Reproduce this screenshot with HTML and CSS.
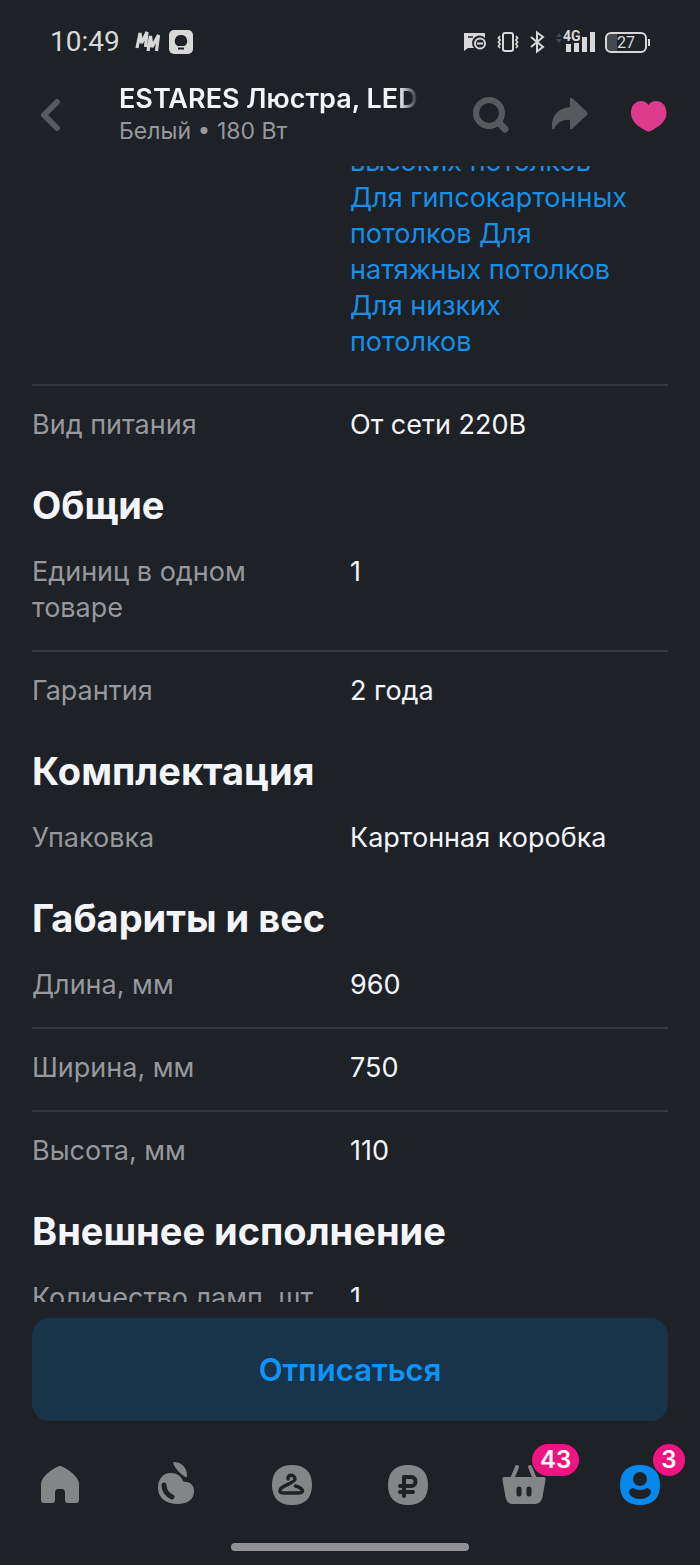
FILE: index.html
```html
<!DOCTYPE html>
<html lang="ru">

<head>
  <meta charset="UTF-8" />
  <meta name="viewport" content="width=device-width, initial-scale=1.0" />
  <title>ESTARES Люстра</title>
  <link rel="stylesheet" href="styles.css">
</head>

<body>
  <!-- строка состояния -->
  <div class="status">
    <span class="time">10:49</span>
    <svg class="mm" width="26" height="24" viewBox="0 0 26 24">
      <path d="M2 18 5 3 6.500 13 12 2 10.500 17M13 21 15.500 6 17 17 23.500 5 21.500 21" fill="none" stroke="#d8d8d8" stroke-width="3.200" stroke-linejoin="bevel" />
    </svg>
    <svg width="24" height="24" viewBox="0 0 24 24">
      <rect width="24" height="24" rx="5" fill="#d8d8d8" />
      <path d="M12 5a6 6 0 0 0-3.500 11h7A6 6 0 0 0 12 5zM9 17.500h6v2H9z" fill="#1e2126" />
    </svg>
    <div class="status-right">
      <svg width="24" height="20" viewBox="0 0 24 20">
        <path d="M1 1h20q1 0 1 1v4a7 7 0 0 0-11 10H5l-4 3z" fill="#d8d8d8" />
        <path d="M5 5h5" stroke="#1e2126" stroke-width="1.500" />
        <circle cx="17" cy="11.500" r="5" fill="none" stroke="#d8d8d8" stroke-width="2" />
        <path d="M14 11.500h6" stroke="#d8d8d8" stroke-width="2" />
      </svg>
      <svg width="22" height="20" viewBox="0 0 22 20">
        <rect x="6" y="1" width="10" height="18" rx="2" fill="none" stroke="#d8d8d8" stroke-width="2" />
        <path d="M3 4 1.500 6 3 8 1.500 10 3 12 1.500 14 3 16M19 4l1.500 2L19 8l1.500 2-1.500 2 1.500 2-1.500 2" fill="none" stroke="#d8d8d8" stroke-width="1.800" />
      </svg>
      <svg width="16" height="22" viewBox="0 0 16 22">
        <path d="M2 6 14 16 8 20.500v-19L14 6 2 16" fill="none" stroke="#d8d8d8" stroke-width="2" />
      </svg>
      <div class="signal">
        <span class="net">4G</span>
        <svg width="40" height="24" viewBox="0 0 40 24">
          <path d="M1 7l3-4 3 4zM1 9l3 4 3-4z" fill="#45484c" />
          <path d="M11 14h5v8h-5zM19 13h5v9h-5zM27 7h5v15h-5zM35 2h5v20h-5z" fill="#d8d8d8" />
        </svg>
      </div>
      <span class="battery">27</span>
    </div>
  </div>

  <!-- шапка товара -->
  <header class="header">
    <button class="icon-btn back" aria-label="Назад">
      <svg width="22" height="34" viewBox="0 0 22 34">
        <path d="M17 4 4 17l13 13" fill="none" stroke="#58595d" stroke-width="6" stroke-linecap="round" stroke-linejoin="round" />
      </svg>
    </button>
    <div class="product">
      <h1>ESTARES Люстра, LED 180 Вт</h1>
      <p>Белый • 180 Вт</p>
    </div>
    <button class="icon-btn" aria-label="Поиск">
      <svg width="38" height="38" viewBox="0 0 38 38">
        <circle cx="17" cy="17" r="13" fill="none" stroke="#58595d" stroke-width="6" />
        <path d="m27 27 6 6" stroke="#58595d" stroke-width="7" stroke-linecap="round" />
      </svg>
    </button>
    <button class="icon-btn" aria-label="Поделиться">
      <svg width="38" height="38" viewBox="0 0 38 38">
        <path d="M19 3q0-2 2-1l15 14q1.500 1.500 0 3L21 33q-2 1-2-1v-8C11 23 6 27 3 33q-2 1-2-1C0 20 7 12 19 11z" fill="#58595d" />
      </svg>
    </button>
    <button class="icon-btn" aria-label="В избранное">
      <svg width="38" height="38" viewBox="0 0 38 38">
        <path d="M18.500 9C14 2 1 4 1 17c0 9 8 14 15.500 18q2 1 4 0C28 31 36.500 26 36.500 17 36.500 4 23 2 18.500 9z" fill="#de3a8c" />
      </svg>
    </button>
  </header>

  <!-- характеристики -->
  <main class="specs">
    <div class="scrolled">
      <dl>
        <div class="row">
          <dt></dt>
          <dd><a href="#">высоких потолков</a> <a href="#">Для гипсокартонных потолков</a> <a href="#">Для натяжных потолков</a> <a href="#">Для низких<br>потолков</a></dd>
        </div>
        <div class="row">
          <dt>Вид питания</dt>
          <dd>От сети 220В</dd>
        </div>
      </dl>

      <h2>Общие</h2>
      <dl>
        <div class="row">
          <dt>Единиц в одном товаре</dt>
          <dd>1</dd>
        </div>
        <div class="row">
          <dt>Гарантия</dt>
          <dd>2 года</dd>
        </div>
      </dl>

      <h2>Комплектация</h2>
      <dl>
        <div class="row">
          <dt>Упаковка</dt>
          <dd>Картонная коробка</dd>
        </div>
      </dl>

      <h2>Габариты и вес</h2>
      <dl>
        <div class="row">
          <dt>Длина, мм</dt>
          <dd>960</dd>
        </div>
        <div class="row">
          <dt>Ширина, мм</dt>
          <dd>750</dd>
        </div>
        <div class="row">
          <dt>Высота, мм</dt>
          <dd>110</dd>
        </div>
      </dl>

      <h2>Внешнее исполнение</h2>
      <dl>
        <div class="row">
          <dt>Количество ламп, шт</dt>
          <dd>1</dd>
        </div>
      </dl>
    </div>
  </main>

  <div class="action">
    <button class="unsubscribe">Отписаться</button>
  </div>

  <!-- нижнее меню -->
  <nav class="tabs">
    <a href="#" aria-label="Главная">
      <svg width="44" height="44" viewBox="0 0 44 44">
        <path d="M19 4q3-2 6 0c6 3 10 6 13 10q3 3 3 8v15q0 3-3 3h-8q-3 0-3-3v-7q0-4-3-4h-4q-3 0-3 4v7q0 3-3 3H6q-3 0-3-3V22q0-5 3-8c3-4 7-7 13-10z" fill="#848587" />
      </svg>
    </a>
    <a href="#" aria-label="Каталог">
      <svg width="44" height="44" viewBox="0 0 44 44">
        <path d="M17 10c6 0 10 3 12 8q1 1 3 1c5 0 8 4 8 9 0 8-6 13-16 13C11 41 4 34 4 25c0-9 5-15 13-15zM20-1c6 0 13 4 13 14q0 2-1.500 1C26 11 21 5 19.500 1q-.500-2 .5-2z" fill="#848587" />
        <path d="M10 22q0 8 8 12" fill="none" stroke="#1e2126" stroke-width="5" stroke-linecap="round" />
      </svg>
    </a>
    <a href="#" aria-label="Одежда">
      <svg width="44" height="44" viewBox="0 0 44 44">
        <path d="M22 2c13 0 20 7 20 20s-7 20-20 20S2 35 2 22 9 2 22 2z" fill="#848587" />
        <path d="M18 16c-1-5 7-5 7 0 0 4-12 6-14.500 10-1.500 3 0 4 3 4h15c4 0 5-2 3-4q-2-2-6-3" fill="none" stroke="#1e2126" stroke-width="3.400" stroke-linecap="round" />
      </svg>
    </a>
    <a href="#" aria-label="Финансы">
      <svg width="44" height="44" viewBox="0 0 44 44">
        <path d="M22 2c13 0 20 7 20 20s-7 20-20 20S2 35 2 22 9 2 22 2z" fill="#848587" />
        <path d="M18 33V14h7c6 0 6 9 0 9H14M14 29h13" fill="none" stroke="#1e2126" stroke-width="4" stroke-linecap="round" stroke-linejoin="round" />
      </svg>
    </a>
    <a href="#" aria-label="Корзина">
      <svg width="44" height="44" viewBox="0 0 44 44">
        <path d="m15 4-5 12M28 4l5 12" stroke="#848587" stroke-width="4" stroke-linecap="round" />
        <path d="M2 14h40q2 0 1.500 3l-3 17q-1.500 7-7.500 7H11q-6 0-7.500-7l-3-17Q0 14 2 14z" fill="#848587" />
        <path d="M17 26v5M27 26v5" stroke="#1e2126" stroke-width="5" stroke-linecap="round" />
      </svg>
      <span class="badge">43</span>
    </a>
    <a href="#" aria-label="Профиль">
      <svg width="44" height="44" viewBox="0 0 44 44">
        <path d="M22 2c13 0 20 7 20 20s-7 20-20 20S2 35 2 22 9 2 22 2z" fill="#0789ec" />
        <circle cx="22" cy="16" r="7" fill="#1e2126" />
        <path d="M15 25q7 4 14 0 5 2 4 5-3 6-11 6t-11-6q-1-3 4-5z" fill="#1e2126" />
      </svg>
      <span class="badge badge-round">3</span>
    </a>
  </nav>
  <div class="home-bar"></div>
</body>

</html>
```
FILE: styles.css
```css
* {
  box-sizing: border-box;
}

body {
  display: flex;
  flex-direction: column;
  height: 100vh;
  margin: 0;
  background: #1e2126;
  color: #f4f5fa;
  font-family: Inter, "Noto Sans", sans-serif;
  font-size: 27px;
  line-height: 36px;
}

h1,
h2,
p,
dl,
dd {
  margin: 0;
}

a {
  color: #1590ea;
  text-decoration: none;
}

button {
  padding: 0;
  border: 0;
  background: none;
  font: inherit;
}

svg {
  display: block;
  overflow: visible;
}

/* строка состояния */
.status {
  display: flex;
  align-items: center;
  height: 84px;
  padding: 0 53px 0 50px;
  color: #d8d8d8;
  font-family: Roboto, sans-serif;
}

.time {
  font-size: 28px;
}

.mm {
  margin: 0 8px 0 15px;
}

.status-right {
  display: flex;
  align-items: center;
  gap: 10px;
  margin-left: auto;
}

.signal {
  position: relative;
}

.net {
  position: absolute;
  top: 0;
  left: 8px;
  font-size: 14px;
  font-weight: 700;
  line-height: 12px;
}

.battery {
  position: relative;
  width: 42px;
  height: 21px;
  border: 2px solid #d8d8d8;
  border-radius: 6px;
  background: linear-gradient(to right, #45484c 27%, transparent 27%);
  font-size: 16px;
  line-height: 17px;
  text-align: center;
}

.battery::after {
  content: "";
  position: absolute;
  top: 5px;
  right: -5px;
  width: 2px;
  height: 7px;
  background: #d8d8d8;
}

/* шапка */
.header {
  display: flex;
  align-items: center;
  flex: none;
  height: 82px;
  padding: 0 32px 21px;
}

.icon-btn {
  display: flex;
  justify-content: center;
  width: 38px;
  margin-left: 41px;
}

.icon-btn.back {
  margin: 0 49px 0 0;
}

.product {
  flex: 1;
  min-width: 0;
  margin-right: 12px;
}

.product h1 {
  overflow: hidden;
  font-size: 27px;
  font-weight: 600;
  line-height: 32px;
  white-space: nowrap;
  -webkit-mask-image: linear-gradient(to left, transparent, #000 20px);
  mask-image: linear-gradient(to left, transparent, #000 20px);
}

.product p {
  color: #97989d;
  font-size: 23px;
  line-height: 32px;
}

/* характеристики */
.specs {
  flex: 1;
  min-height: 0;
  padding: 0 32px;
  overflow: hidden;
}

/* список прокручен, первая строка обрезана */
.scrolled {
  margin-top: -43px;
}

.row {
  display: grid;
  grid-template-columns: 1fr 1fr;
  padding: 21px 0 24px;
}

.row + .row {
  border-top: 2px solid #35373d;
}

.row dt {
  padding-right: 32px;
  color: #97989d;
}

.row dd {
  padding-right: 36px;
}

h2 {
  padding: 14px 0 4px;
  font-size: 38px;
  font-weight: 700;
  line-height: 48px;
}

/* кнопка */
.action {
  padding: 16px 32px;
}

.unsubscribe {
  width: 100%;
  height: 103px;
  border-radius: 18px;
  background: #193348;
  color: #0f93f8;
  font-size: 31px;
  font-weight: 600;
}

/* нижнее меню */
.tabs {
  display: flex;
  justify-content: space-between;
  padding: 26px 38px 36px;
}

.tabs a {
  position: relative;
}

.badge {
  position: absolute;
  top: -19px;
  left: 30px;
  min-width: 32px;
  height: 32px;
  padding: 0 8px;
  border-radius: 16px;
  background: #f01382;
  color: #fff;
  font-size: 24px;
  font-weight: 600;
  line-height: 32px;
  text-align: center;
}

.badge-round {
  left: 35px;
}

.home-bar {
  flex: none;
  align-self: center;
  width: 34%;
  height: 8px;
  margin-bottom: 14px;
  border-radius: 4px;
  background: #919193;
}
```
